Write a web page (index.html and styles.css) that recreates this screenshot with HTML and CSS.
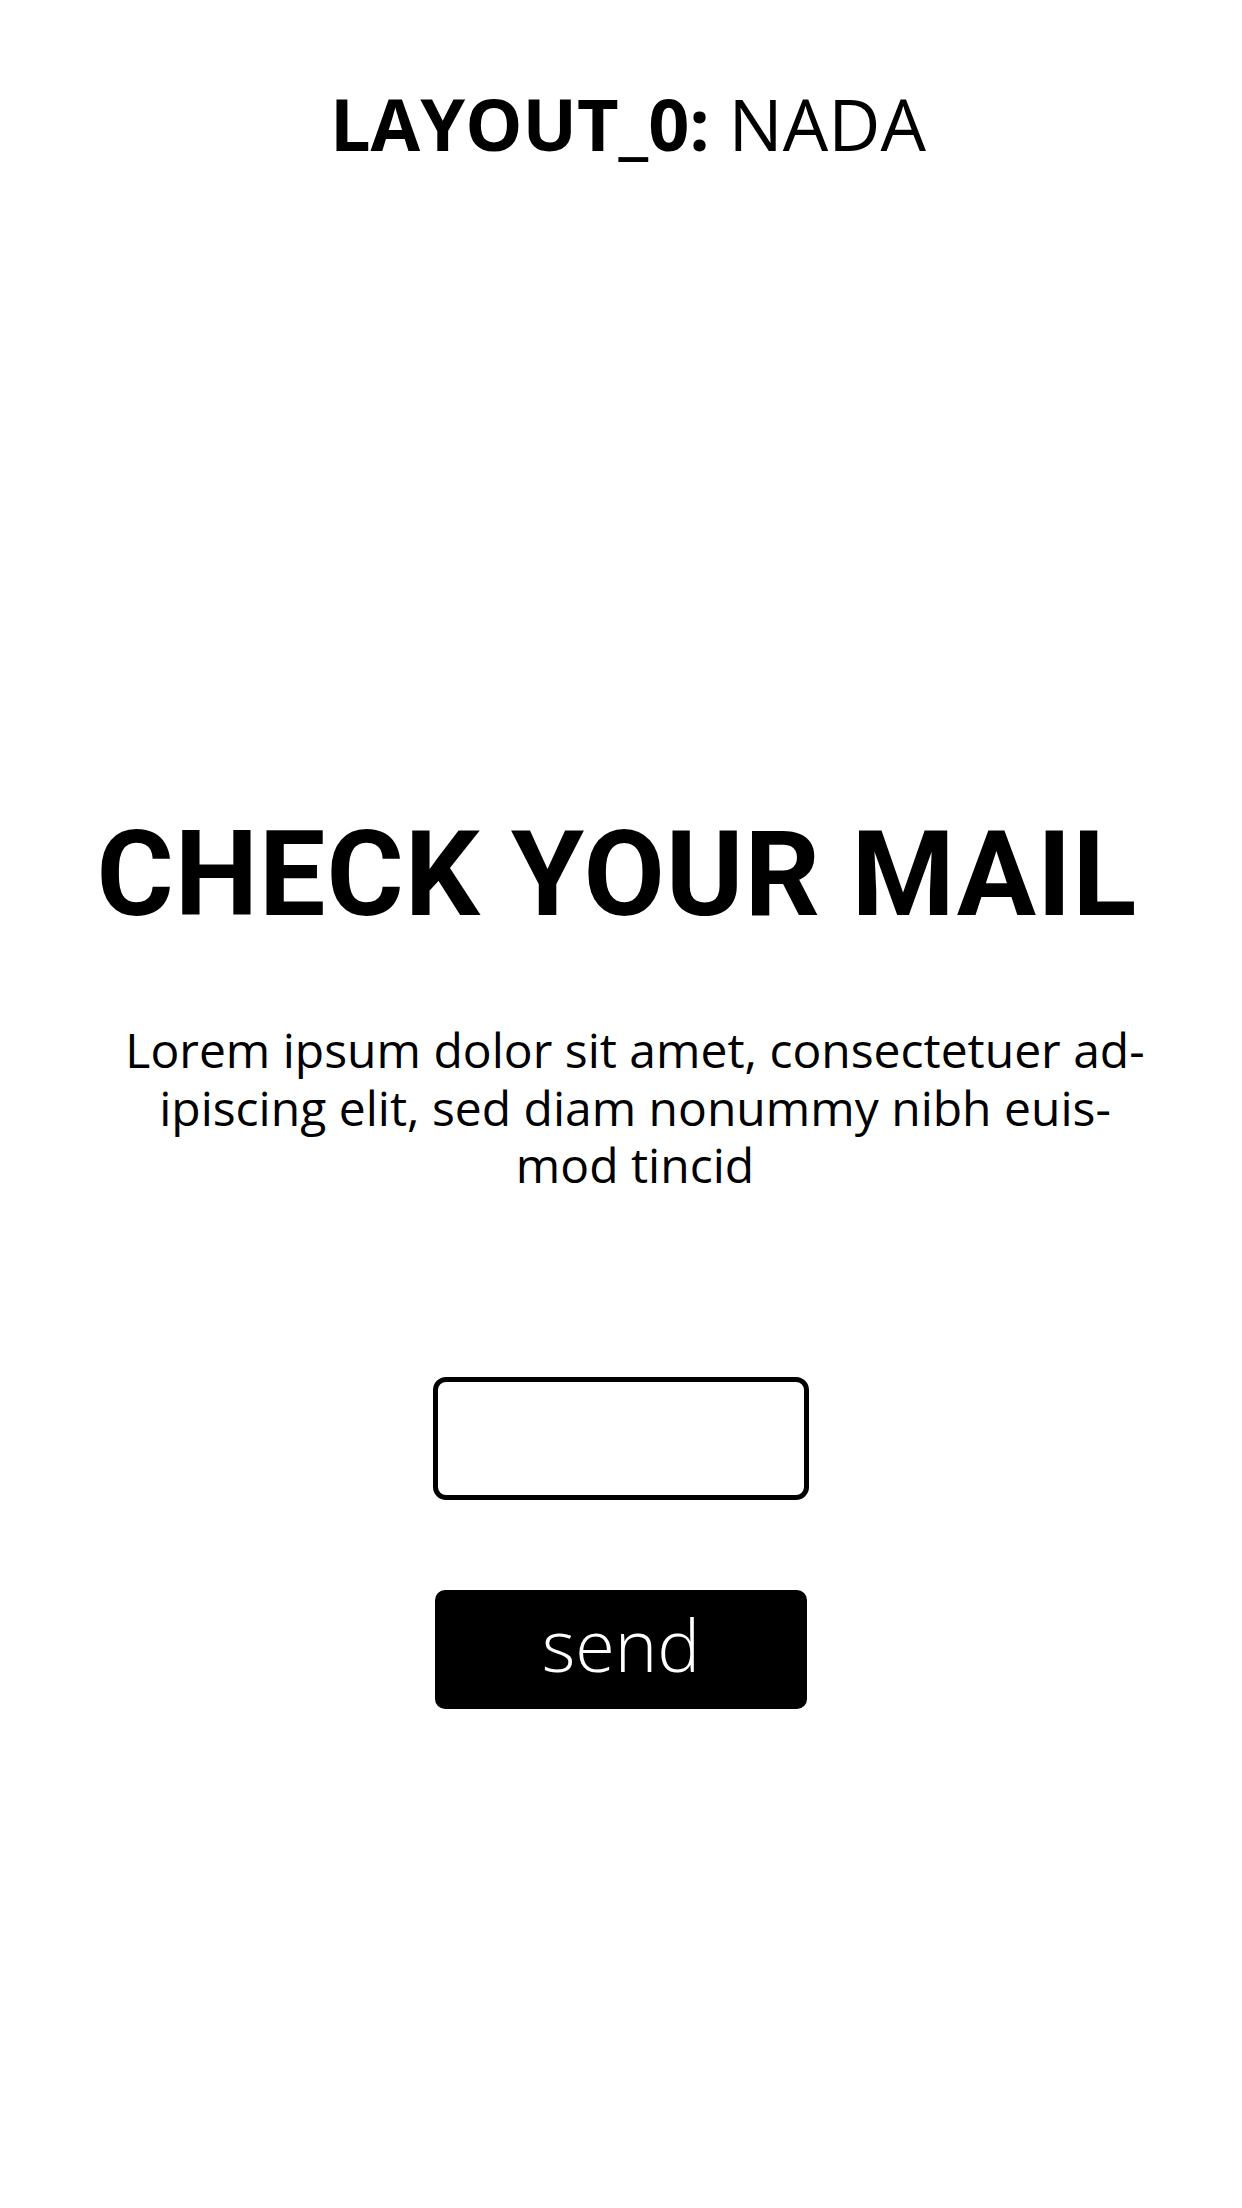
FILE: index.html
```html
<!DOCTYPE html>
<html lang="en">
<head>
<meta charset="utf-8">
<title>Layout 0</title>
<link rel="stylesheet" href="styles.css">
</head>
<body>
<main class="page">
  <h1 class="title"><span class="title-bold">LAYOUT_0:</span> NADA</h1>
  <h2 class="heading">CHECK YOUR MAIL</h2>
  <p class="lead">Lorem ipsum dolor sit amet, consectetuer ad-<br>ipiscing elit, sed diam nonummy nibh euis-<br>mod tincid</p>
  <input class="field" type="text" aria-label="email">
  <button class="send" type="button">send</button>
</main>
</body>
</html>
```

FILE: styles.css
```css
html, body {
  margin: 0;
  padding: 0;
  background: #ffffff;
}

.page {
  width: 1242px;
  min-height: 2208px;
  display: flex;
  flex-direction: column;
  align-items: center;
  color: #000000;
}

.title {
  margin: 87px 0 0 0;
  padding-left: 14px;
  font-family: "Open Sans", "Liberation Sans", sans-serif;
  font-size: 72px;
  line-height: 1;
  font-weight: 400;
  white-space: nowrap;
}

.title-bold {
  font-weight: 700;
}

.heading {
  margin: 657px 0 0 0;
  padding-right: 8px;
  font-family: Roboto, "Liberation Sans", sans-serif;
  font-size: 118px;
  line-height: 1;
  font-weight: 700;
  letter-spacing: 1px;
  white-space: nowrap;
}

.lead {
  margin: 87px 0 0 0;
  padding-left: 28px;
  font-family: "Open Sans", "Liberation Sans", sans-serif;
  font-size: 48px;
  line-height: 57.5px;
  font-weight: 400;
  text-align: center;
}

.field {
  margin: 183px 0 0 0;
  box-sizing: border-box;
  width: 376px;
  height: 123px;
  border: 5px solid #000000;
  border-radius: 13px;
  background: #ffffff;
  padding: 0;
  outline: none;
}

.send {
  margin: 90px 0 0 0;
  box-sizing: border-box;
  width: 372px;
  height: 119px;
  padding: 0 0 10px 0;
  border: none;
  border-radius: 10px;
  background: #000000;
  color: #ffffff;
  font-family: "Open Sans", "Liberation Sans", sans-serif;
  font-size: 72px;
  font-weight: 300;
  line-height: 109px;
}
```
